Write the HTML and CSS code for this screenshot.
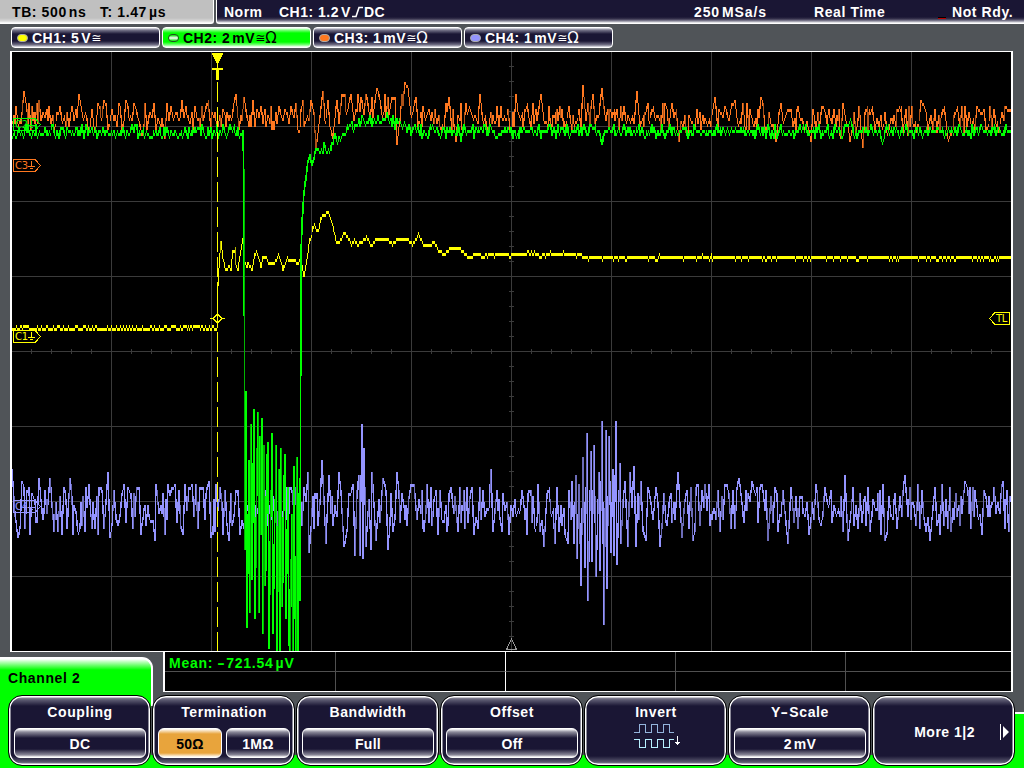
FILE: index.html
```html
<!DOCTYPE html>
<html lang="en">
<head>
    <meta charset="UTF-8">
    <title>Oscilloscope</title>
    <link rel="stylesheet" href="styles.css">
</head>
<body>
<div class="screen">
    <div class="topbar">
        <div class="timebase"><span class="tb">TB: 500<i>ns</i></span><span>T: 1.47<i>µs</i></span></div>
        <div class="status">
            <span class="norm">Norm</span>
            <span class="trigger">CH1: 1.2<i>V</i><svg width="13" height="12" viewBox="0 0 13 12"><path d="M1 10.5H5L8 1.5H12"/></svg>DC</span>
            <span class="rate">250<i>MSa/s</i></span>
            <span class="mode">Real Time</span>
            <span class="led"></span>
            <span class="ready">Not Rdy.</span>
        </div>
    </div>

    <div class="channels">
        <div class="channel ch1"><b class="dot"></b>CH1: 5<i>V</i><em>≅</em></div>
        <div class="channel ch2 active"><b class="dot"></b>CH2: 2<i>mV</i><em>≅</em><em class="ohm">Ω</em></div>
        <div class="channel ch3"><b class="dot"></b>CH3: 1<i>mV</i><em>≅</em><em class="ohm">Ω</em></div>
        <div class="channel ch4"><b class="dot"></b>CH4: 1<i>mV</i><em>≅</em><em class="ohm">Ω</em></div>
    </div>

    <svg class="plot" viewBox="10 51 1003 601">
        <path id="grid"/>
        <path class="wave blue" id="ch4"/>
        <path class="wave blue dim" id="ch4dim"/>
        <path class="wave orange" id="ch3"/>
        <path class="wave orange dim" id="ch3dim"/>
        <path class="wave yellow" id="ch1"/>
        <path class="wave yellow dim" id="ch1dim"/>
        <path class="wave green" id="ch2"/>
        <path class="wave green dim" id="ch2dim"/>

        <!-- trigger position and level -->
        <path class="cursor" d="M217.5 82V651"/>
        <path class="fill-yellow" d="M212 53H223V55H222V57H221V59H220V61H219V63H216V61H215V59H214V57H213V55H212ZM217 63H218V68H223V70H219V80H216V70H212V68H217Z"/>
        <path class="line-yellow" d="M210 318.5H213L217.5 314L222 318.5H225M213 318.5L217.5 323L222 318.5"/>

        <!-- ground markers -->
        <g class="tag yellow"><path d="M13.5 330.5H35L40.5 336.5L35 342.5H13.5ZM31.5 332V337M28 337.5H35M30 339.5H33"/><text x="15" y="340">C1</text></g>
        <g class="tag green"><path d="M13.5 118.5H35L40.5 124.5L35 130.5H13.5ZM31.5 120V125M28 125.5H35M30 127.5H33"/><text x="15" y="128">C2</text></g>
        <g class="tag orange"><path d="M13.5 159.5H35L40.5 165.5L35 171.5H13.5ZM31.5 161V166M28 166.5H35M30 168.5H33"/><text x="15" y="169">C3</text></g>
        <g class="tag blue"><path d="M13.5 500.5H35L40.5 506.5L35 512.5H13.5ZM31.5 502V507M28 507.5H35M30 509.5H33"/><text x="15" y="510">C4</text></g>
        <g class="tag yellow"><path d="M1009.5 312.5H995L989.5 318.5L995 324.5H1009.5Z"/><text x="996" y="322">TL</text></g>
        <path class="center-mark" d="M511.5 639L506.5 649.5H516.5Z"/>

        <path class="frame" d="M10 51H1013V652H10ZM12 52V651H1011V52Z"/>
    </svg>

    <div class="lower">
        <div class="tab">Channel 2</div>
        <div class="measure">
            <div class="mean">Mean: <s>-</s>721.54<i>µV</i></div><div></div><div></div><div></div><div></div>
            <div></div><div></div><div></div><div></div><div></div>
        </div>
    </div>

    <div class="softkeys">
        <div class="key"><span>Coupling</span><div class="values"><div>DC</div></div></div>
        <div class="key"><span>Termination</span><div class="values"><div class="selected">50Ω</div><div>1MΩ</div></div></div>
        <div class="key"><span>Bandwidth</span><div class="values"><div>Full</div></div></div>
        <div class="key"><span>Offset</span><div class="values"><div>Off</div></div></div>
        <div class="key"><span>Invert</span>
            <svg class="invert" width="48" height="28" viewBox="0 0 48 28">
                <path class="upper" d="M0 9.5H5.5V1.5H11.5V9.5H17.5V1.5H23.5V9.5H29.5V1.5H35.5V9.5H40"/>
                <path class="inverted" d="M0 16.5H5.5V24.5H11.5V16.5H17.5V24.5H23.5V16.5H29.5V24.5H35.5V16.5H40"/>
                <path class="arrow" d="M43.5 13V22M41 19.5H46M42 20.5H45"/>
            </svg>
        </div>
        <div class="key"><span>Y<s>-</s>Scale</span><div class="values"><div>2<i>mV</i></div></div></div>
        <div class="key more"><span>More 1|2</span><svg width="10" height="16" viewBox="0 0 10 16"><path d="M0 0H1V16H0ZM3 2L9 8L3 14Z"/></svg></div>
    </div>
</div>
<script src="scope.js"></script>
</body>
</html>
```

FILE: styles.css
```css
* {
    box-sizing: border-box;
}
body {
    margin: 0;
    background: #505458;
    font-family: "Liberation Sans", Arial, sans-serif;
    font-size: 14px;
    font-weight: bold;
    letter-spacing: 0.6px;
    color: #fff;
}
i {
    font-style: normal;
    margin-left: 2px;
}
s {
    display: inline-block;
    text-decoration: none;
    transform: scaleX(1.6);
    margin: 0 2px 0 1px;
}
.screen {
    width: 1024px;
    height: 768px;
    overflow: hidden;
    white-space: nowrap;
}

/* header */
.topbar {
    display: flex;
    height: 24px;
    gap: 2px;
    line-height: 24px;
}
.timebase {
    width: 214px;
    padding-left: 12px;
    color: #000;
    letter-spacing: 0.6px;
    background: linear-gradient(#c0c0c0 18px, #d8d8d8 21px, #fff 23px);
    border-right: 1px solid #fff;
    border-bottom: 1px solid #fff;
    border-bottom-right-radius: 3px;
}
.tb {
    display: inline-block;
    width: 88px;
}
.status {
    flex: 1;
    display: grid;
    grid-template-columns: 55px 415px 120px 124px 14px 1fr;
    padding-left: 7px;
    background: linear-gradient(#1a1634 17px, #38344e 19px, #8a889a 21px, #fff 23px);
    border-left: 1px solid #fff;
    border-bottom: 1px solid #fff;
    border-bottom-left-radius: 3px;
}
.norm, .trigger {
    letter-spacing: 0.5px;
}
.trigger svg {
    vertical-align: -1px;
    fill: none;
    stroke: #fff;
    stroke-width: 1.6;
}
.rate {
    letter-spacing: 0.9px;
}
.led {
    width: 8px;
    height: 2px;
    margin-top: 17px;
    background: linear-gradient(#000 50%, #b00 50%);
}

/* channel buttons */
.channels {
    display: flex;
    gap: 2px;
    height: 27px;
    padding: 3px 0 4px 11px;
}
.channel {
    width: 149px;
    height: 21px;
    padding-left: 5px;
    display: flex;
    align-items: center;
    letter-spacing: 0.5px;
    border: 1px solid #fff;
    border-radius: 4px;
    background: linear-gradient(#e8e8ee, #77758a 2px, #1a1634 6px, #1a1634 13px, #77758a 17px, #e8e8ee);
}
.channel.active {
    color: #000;
    background: linear-gradient(#fff, #80ff80 2px, #00ff00 5px, #00ff00 14px, #80ff80 17px, #fff);
}
.channel em {
    font: 12px "DejaVu Sans", sans-serif;
    letter-spacing: 0;
}
.channel .ohm {
    font-size: 15px;
}
.dot {
    width: 11px;
    height: 8px;
    margin-right: 4px;
    border-radius: 4px;
    border: 1px solid #aaa;
    background: #ffff00;
}
.ch2 .dot {
    border-color: #205020;
    background: linear-gradient(#00e000, #fff 50%, #00e000);
}
.ch3 .dot {
    background: #ff7820;
}
.ch4 .dot {
    background: #9494ff;
}

/* waveform display */
.plot {
    display: block;
    width: 1003px;
    height: 601px;
    margin-left: 10px;
    background: #000;
    shape-rendering: crispEdges;
    fill: none;
}
#grid {
    stroke: #3b3b3b;
}
.yellow { stroke: #ffff00; color: #ffff00; }
.green { stroke: #00ff00; color: #00ff00; }
.orange { stroke: #ff7820; color: #ff7820; }
.blue { stroke: #9494ff; color: #9494ff; }
.yellow.dim { stroke: #b8b800; }
.green.dim { stroke: #00b400; }
.orange.dim { stroke: #ac5218; }
.blue.dim { stroke: #6c6cb8; }
.cursor {
    stroke: #ffff00;
    stroke-dasharray: 20 5;
}
.line-yellow {
    stroke: #ffff00;
}
.fill-yellow {
    fill: #ffff00;
}
.tag text {
    font: 10px "DejaVu Sans", sans-serif;
    letter-spacing: -0.3px;
    fill: currentColor;
    stroke: none;
}
.center-mark {
    stroke: #999;
}
.frame {
    fill: #fff;
    fill-rule: evenodd;
}

/* measurements */
.lower {
    display: flex;
    height: 42px;
}
.tab {
    width: 153px;
    height: 37px;
    margin-top: 5px;
    padding: 11px 0 0 8px;
    color: #000;
    border: solid #fff;
    border-width: 2px 2px 0 0;
    border-left: 0;
    border-top-right-radius: 11px;
    background: linear-gradient(#fff, #00ff00 11px);
}
.measure {
    width: 850px;
    height: 40px;
    margin-left: 10px;
    display: grid;
    grid-template: 20px 19px / 171px 170px 170px 170px 1fr;
    background: #000;
    border: 1px solid #fff;
    border-width: 0 2px 1px 2px;
}
.measure div {
    border-right: 1px solid #505050;
}
.measure div:nth-child(-n+5) {
    border-bottom: 1px solid #505050;
}
.measure div:nth-child(5n+2) {
    border-right-color: #fff;
}
.measure div:nth-child(5n) {
    border-right: 0;
}
.mean {
    padding-left: 4px;
    line-height: 22px;
    letter-spacing: 0.75px;
    color: #00ff00;
}

/* menu at the bottom */
.softkeys {
    display: flex;
    height: 74px;
    padding: 1px 0 0 8px;
    gap: 1px;
    background:
        linear-gradient(#fff, #fff) 151px 0 / 2px 12px no-repeat,
        linear-gradient(#0f0, #0f0) 0 0 / 151px 74px no-repeat,
        linear-gradient(#fff 2px, #0f0 2px) 1010px 18px / 14px 56px no-repeat,
        linear-gradient(#0f0, #0f0) 0 61px / 1024px 13px no-repeat,
        #505458;
}
.key {
    width: 143px;
    height: 71px;
    padding: 8px 0 0 1px;
    text-align: center;
    line-height: 16px;
    border: 1px solid #000;
    border-radius: 14px;
    box-shadow: inset 0 0 0 1.5px #fff;
    background: linear-gradient(#aaa9b5, #5b5970 4px, #1a1634 10px, #1a1634 60px, #5b5970 66px, #aaa9b5);
}
.key span {
    display: block;
}
.values {
    display: flex;
    gap: 4px;
    margin: 8px 4px 0;
}
.values div {
    flex: 1;
    height: 30px;
    line-height: 30px;
    border: 1px solid #fff;
    border-radius: 6px;
    letter-spacing: 0.3px;
    background: linear-gradient(#fff, #8c8a9a 3px, #1a1634 9px, #1a1634 20px, #8c8a9a 26px, #fff);
}
.values .selected {
    color: #000;
    background: linear-gradient(#fff, #e8a43c 5px, #e8a43c 24px, #fff);
}
.invert {
    display: block;
    margin: 3px 0 0 48px;
    fill: none;
    shape-rendering: crispEdges;
}
.upper { stroke: #94b4dc; }
.inverted { stroke: #b8f0ff; }
.arrow { stroke: #fff; }
.more {
    display: flex;
    align-items: center;
    justify-content: flex-end;
    gap: 25px;
    padding: 2px 4px 0 0;
    letter-spacing: 0.5px;
}
.more path {
    fill: #fff;
}
```

FILE: scope.js
```javascript
var seed = 7;
function rnd() {
    seed = (seed * 16807) % 2147483647;
    return seed / 2147483647;
}

// "x,y x,y ..." -> [[x, y], ...]
function points(str) {
    return str.trim().split(/\s+/).map(function (p) {
        return p.split(',').map(Number);
    });
}

function valueAt(list, x) {
    for (var i = 1; i < list.length; i++) {
        if (x <= list[i][0]) {
            var a = list[i - 1], b = list[i];
            return a[1] + (b[1] - a[1]) * (x - a[0]) / ((b[0] - a[0]) || 1);
        }
    }
    return list[list.length - 1][1];
}

// random samples around a base line; fixed points replace their neighbours
function noise(from, to, base, up, down, fixed, power) {
    var out = [], side = 1;
    for (var x = from; x <= to; x += rnd() < 0.4 ? 1 : 2) {
        var near = fixed.some(function (p) { return Math.abs(p[0] - x) < 1.5; });
        if (near) continue;
        if (rnd() < 0.75) side = -side;
        var r = Math.pow(rnd(), power || 1.15);
        out.push([x, valueAt(base, x) + (side > 0 ? -up * r : down * r)]);
    }
    return out.concat(fixed).sort(function (a, b) { return a[0] - b[0]; });
}

// one vertical bar per screen column, in steps of 3 pixels;
// spread widens the part of the trace that each column covers
function draw(id, list, from, to, dimFrom, spread) {
    var bright = '', dim = '';
    for (var x = from; x <= to; x++) {
        var a = valueAt(list, x), b = valueAt(list, Math.min(x + 1, to));
        var lo = Math.min(a, b), hi = Math.max(a, b);
        if (spread) {
            var c = valueAt(list, Math.max(from, x - spread)), d = valueAt(list, Math.min(to, x + 1 + spread));
            lo = Math.min(lo, c, d);
            hi = Math.max(hi, c, d);
        }
        var top = Math.floor(lo / 3) * 3 + 1;
        var bottom = Math.min(651, Math.floor(hi / 3) * 3 + 4);
        if (bottom - top === 6) {
            top = Math.floor(a / 3) * 3 + 1;
            bottom = top + 3;
        } else if (bottom - top > 6 && bottom < 640) {
            bottom -= 3;
        }
        var bar = 'M' + (x + 0.5) + ' ' + top + 'V' + bottom;
        if (bottom - top >= dimFrom && rnd() < 0.3) dim += bar;
        else bright += bar;
    }
    document.getElementById(id).setAttribute('d', bright);
    document.getElementById(id + 'dim').setAttribute('d', dim);
}

// graticule
var grid = '', i;
for (i = 111; i < 1011; i += 100) grid += 'M' + (i + 0.5) + ' 52V651';
for (i = 126; i < 651; i += 75) grid += 'M12 ' + (i + 0.5) + 'H1011';
for (i = 31; i < 1011; i += 20) grid += 'M' + (i + 0.5) + ' 349V354';
for (i = 66; i < 651; i += 15) grid += 'M509 ' + (i + 0.5) + 'H514';
document.getElementById('grid').setAttribute('d', grid);

// CH4
var blue = points('13,484 18,538 22,481 39,478 50,478 54,532 64,487 70,478 108,472 110,538 128,487 139,487 155,541 156,484 ' +
    '175,484 189,487 203,487 209,481 211,538 229,541 308,472 309,552 322,460 326,543 329,475 339,472 344,547 353,484 ' +
    '355,555 357,493 359,475 360,555 362,424 363,558 364,448 366,546 369,500 371,549 372,472 376,541 383,478 388,549 397,472 414,484 ' +
    '451,487 491,469 544,546 549,487 555,544 568,544 569,490 571,520 572,481 574,543 576,475 577,558 579,484 581,586 583,457 585,568 ' +
    '587,433 588,601 591,451 592,561 594,445 596,577 599,472 600,571 602,421 604,625 606,430 607,589 609,436 611,552 613,469 ' +
    '614,555 616,421 617,565 620,463 621,544 625,481 628,546 630,472 634,466 636,546 641,481 646,540 648,487 656,487 660,546 ' +
    '678,472 682,537 693,540 698,484 725,484 739,478 752,481 762,484 768,540 775,487 788,543 845,475 848,540 885,541 905,475 930,541 965,481 1003,480');
draw('ch4', noise(12, 1010, [[12, 509], [1010, 509]], 25, 27, blue, 0.9), 12, 1010, 14, 0.2);

// CH3
var orange = points('24,91 79,94 104,100 126,100 142,136 165,138 208,100 236,94 244,97 253,100 311,100 316,150 319,125 323,91 ' +
    '328,100 330,128 333,138 342,94 351,94 366,94 377,88 392,97 397,144 405,82 408,88 416,97 449,98 456,141 480,94 516,94 541,94 583,85 593,94 ' +
    '602,88 637,91 653,106 676,109 679,141 715,97 732,103 735,100 761,97 776,141 788,109 811,141 822,106 843,103 850,141 ' +
    '863,147 872,106 906,109 921,100 924,106 944,106 948,138 957,106 977,106 984,109 1008,109');
draw('ch3', noise(12, 1010, points('12,117 300,118 325,112 395,107 420,117 620,117 680,121 720,119 760,118 800,122 1010,122'), 16, 14, orange, 1.1), 12, 1010, 10, 0.1);

// CH1
var yellow = points('217,329 218,286 219,267 221,242 223,258 225,268 227,268 229,265 231,270 233,251 235,247 236,265 238,270 241,249 ' +
    '243,239 245,262 247,267 248,263 250,266 252,270 255,254 256,250 259,260 261,267 263,257 266,257 268,263 274,263 278,254 ' +
    '281,261 283,270 287,257 289,260 295,260 297,263 300,257 304,276 307,260 310,238 314,224 316,230 319,229 322,213 324,215 ' +
    '326,211 329,213 333,226 336,241 339,242 343,232 346,234 351,243 354,239 357,244 362,240 366,236 371,245 375,239 387,239 ' +
    '392,243 397,239 408,239 412,243 416,237 418,233 423,244 431,244 433,241 438,249 444,254 449,248 453,246 460,248 465,254 ' +
    '471,257 473,254');
yellow = noise(12, 216, [[12, 327.5], [216, 327.5]], 2.4, 2.4, []).concat(yellow)
    .concat(noise(475, 1010, points('475,254 525,254 530,252 540,254 560,253 580,253.5 584,256.8 1010,257.2'), 2, 2, []));
draw('ch1', yellow, 12, 1010, 12, 0);

// CH2: idle, burst, recovery
var burst = points('243,131 244,190 245,550 246,391 247,628 249,460 250,612 251,424 252,580 254,409 255,618 257,469 258,412 259,612 260,436 ' +
    '261,535 262,418 263,634 264,445 265,585 267,454 267,640 268,442 269,646 271,490 271,600 272,433 273,634 275,500 275,600 276,445 ' +
    '277,651 279,468 280,651 281,448 282,607 284,475 284,651 285,454 286,618 288,487 289,643 289,457 290,651 292,514 293,651 294,466 ' +
    '295,604 296,651 297,457 298,651 299,493 300,600 301,256 302,225 303,207 304,193 306,178 308,161');
var recovery = points('310,161 312,160 318,153 322,147 330,148 335,138 345,134 350,128 360,124 370,121 380,119 388,117 395,124 405,126 420,131 1010,131');
var green = noise(12, 242, [[12, 132], [242, 132]], 7.5, 7, [])
    .concat(burst)
    .concat(noise(310, 1010, recovery, 7.5, 8, points('461,141 602,145 850,119 882,141')));
// the burst is packed tighter than one sample per column
draw('ch2', green, 12, 1010, 60, 0.35);
```
